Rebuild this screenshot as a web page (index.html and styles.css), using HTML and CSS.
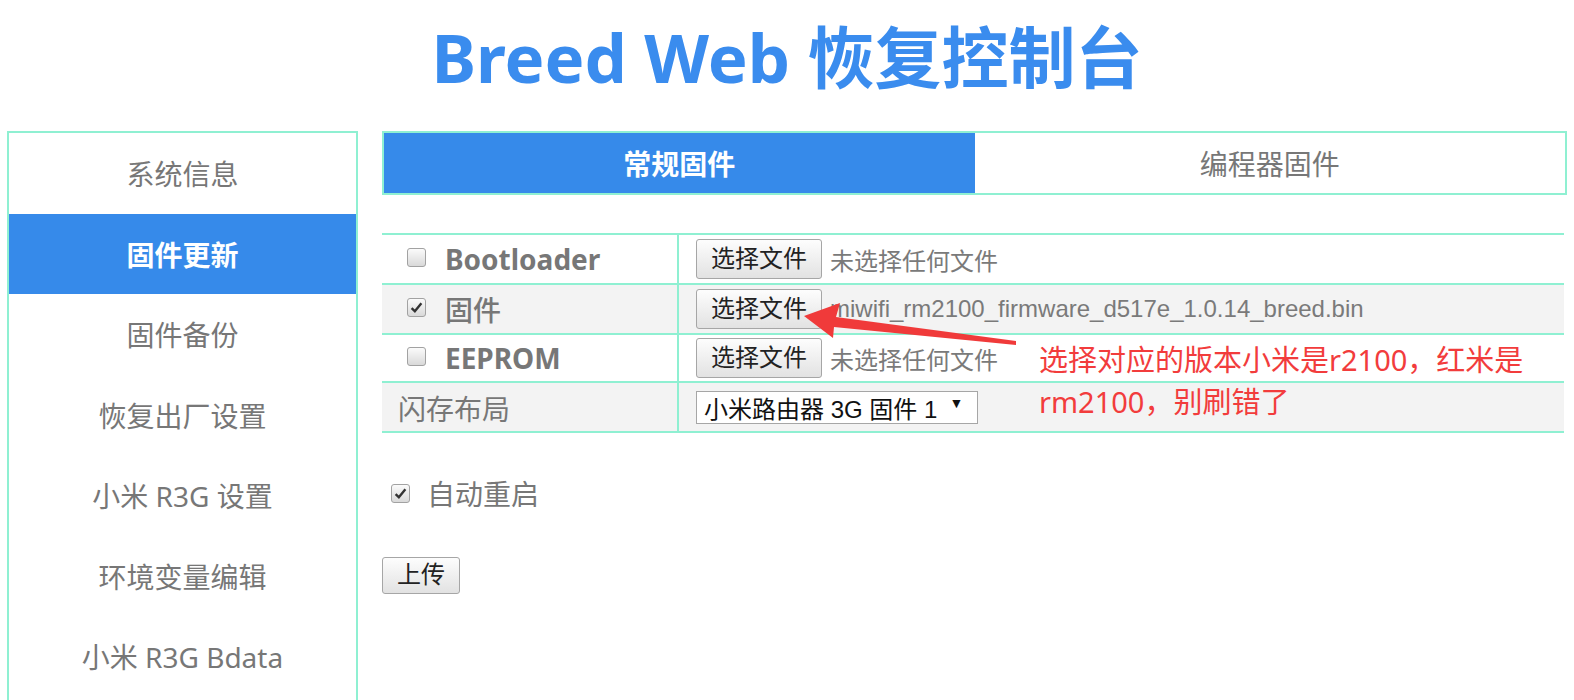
FILE: index.html
```html
<!DOCTYPE html>
<html lang="zh-CN">
<head>
<meta charset="utf-8">
<title>Breed Web 恢复控制台</title>
<link rel="stylesheet" href="styles.css">
</head>
<body>
<header class="header">
  <h1 class="title">Breed Web 恢复控制台</h1>
</header>
<div class="layout">
  <nav class="sidebar">
    <a class="nav-item">系统信息</a>
    <a class="nav-item active">固件更新</a>
    <a class="nav-item">固件备份</a>
    <a class="nav-item">恢复出厂设置</a>
    <a class="nav-item">小米 R3G 设置</a>
    <a class="nav-item">环境变量编辑</a>
    <a class="nav-item">小米 R3G Bdata</a>
  </nav>
  <main class="main">
    <div class="tabs">
      <div class="tab active">常规固件</div>
      <div class="tab">编程器固件</div>
    </div>
    <table class="fw-table">
      <tr>
        <td class="c1"><span class="cb"></span><span class="lbl">Bootloader</span></td>
        <td class="c2"><span class="btn">选择文件</span><span class="fname">未选择任何文件</span></td>
      </tr>
      <tr class="alt">
        <td class="c1"><span class="cb checked"><svg viewBox="0 0 12 12" class="tick"><path d="M1.5 6.5 L4.5 9.5 L10.5 2" fill="none" stroke="#333" stroke-width="2.2"/></svg></span><span class="lbl cjk">固件</span></td>
        <td class="c2"><span class="btn">选择文件</span><span class="fname">miwifi_rm2100_firmware_d517e_1.0.14_breed.bin</span></td>
      </tr>
      <tr>
        <td class="c1"><span class="cb"></span><span class="lbl">EEPROM</span></td>
        <td class="c2"><span class="btn">选择文件</span><span class="fname">未选择任何文件</span></td>
      </tr>
      <tr class="alt">
        <td class="c1 plain">闪存布局</td>
        <td class="c2"><span class="select">小米路由器 3G 固件 1<span class="caret">▼</span></span></td>
      </tr>
    </table>
    <div class="reboot"><span class="cb checked"><svg viewBox="0 0 12 12" class="tick"><path d="M1.5 6.5 L4.5 9.5 L10.5 2" fill="none" stroke="#333" stroke-width="2.2"/></svg></span><span class="reboot-text">自动重启</span></div>
    <div class="upload-row"><span class="btn upload">上传</span></div>

    <div class="note">选择对应的版本小米是r2100，红米是<br>rm2100，别刷错了</div>
    <svg class="arrow" viewBox="0 0 220 50" width="220" height="50">
      <polygon points="2,15 38,2 34,16 214,40 214,44 32,26 31,37" fill="#f03a3a"/>
    </svg>
  </main>
</div>
</body>
</html>
```
FILE: styles.css
```css
* { box-sizing: border-box; }
html, body { margin: 0; padding: 0; background: #fff; overflow: hidden; }
body {
  font-family: "Noto Sans", "Noto Sans CJK SC", sans-serif;
  color: #777;
  width: 1574px;
  height: 700px;
}
.header { height: 131px; padding-top: 15px; }
.title {
  margin: 0;
  text-align: center;
  font-size: 67px;
  line-height: 84px;
  font-weight: 700;
  color: #3a8cee;
}
.layout {
  display: flex;
  gap: 24px;
  padding-left: 7px;
  align-items: flex-start;
}
.sidebar {
  flex: none;
  width: 351px;
  border: 2px solid #8ff0d2;
  display: flex;
  flex-direction: column;
  padding-bottom: 60px;
}
.nav-item {
  height: 80.5px;
  display: flex;
  align-items: center;
  justify-content: center;
  font-size: 28px;
  color: #777;
}
.nav-item.active {
  background: #368aea;
  color: #fff;
  font-weight: 700;
}
.main {
  flex: none;
  width: 1185px;
  position: relative;
}
.tabs {
  display: flex;
  height: 64px;
  border: 2px solid #8ff0d2;
}
.tab {
  flex: 1;
  display: flex;
  align-items: center;
  justify-content: center;
  font-size: 28px;
  color: #777;
}
.tab.active {
  background: #368aea;
  color: #fff;
  font-weight: 700;
}
.fw-table {
  margin-top: 38px;
  width: 1182px;
  border-collapse: collapse;
}
.fw-table td {
  border-top: 2px solid #8ff0d2;
  border-bottom: 2px solid #8ff0d2;
  height: 50px;
  padding: 0;
  vertical-align: middle;
}
.fw-table tr.alt td { background: #f3f3f3; }
.fw-table tr:nth-child(3) td { height: 48px; }
.c1 {
  width: 296px;
  border-right: 2px solid #8ff0d2;
  padding-left: 16px !important;
  white-space: nowrap;
}
.c1.plain { font-size: 28px; color: #777; padding-top: 2px !important; }
.c2 { padding-left: 17px !important; white-space: nowrap; }
.cb {
  display: inline-block;
  width: 19px;
  height: 19px;
  border: 1px solid #a2a2a2;
  border-radius: 3px;
  background: linear-gradient(#fbfbfb, #d9d9d9);
  vertical-align: middle;
  margin-left: 9px;
  margin-right: 19px;
  position: relative;
  top: -2px;
}
.cb .tick { width: 13px; height: 13px; display: block; margin: 2px 0 0 2px; }
.lbl {
  font-size: 28px;
  font-weight: 700;
  color: #777;
  vertical-align: middle;
}
.lbl.cjk { font-weight: 500; font-size: 28px; }
.btn {
  display: inline-block;
  vertical-align: middle;
  height: 40px;
  line-height: 37px;
  padding: 0 14px;
  border: 1px solid #a6a6a6;
  border-radius: 3px;
  background: linear-gradient(#fdfdfd, #e2e2e2);
  font-family: "Liberation Sans", "Noto Sans CJK SC", sans-serif;
  font-size: 24px;
  color: #222;
}
.fname {
  display: inline-block;
  vertical-align: middle;
  margin-left: 8px;
  font-family: "Liberation Sans", "Noto Sans CJK SC", sans-serif;
  font-size: 24px;
  color: #7a7a7a;
}
.select {
  display: inline-flex;
  align-items: center;
  vertical-align: middle;
  width: 282px;
  height: 33px;
  padding: 0 0 0 7px;
  border: 1px solid #a6a6a6;
  background: #fff;
  font-family: "Liberation Sans", "Noto Sans CJK SC", sans-serif;
  font-size: 24px;
  color: #111;
}
.caret { font-size: 14px; margin-left: 12px; position: relative; top: -4px; }
.reboot {
  margin-top: 40px;
  height: 40px;
  display: flex;
  align-items: center;
}
.reboot .cb { margin-left: 9px; margin-right: 17px; top: 0; }
.reboot-text { font-size: 28px; color: #777; }
.upload-row { margin-top: 44px; }
.btn.upload { height: 37px; line-height: 34px; padding: 0 14px; font-size: 24px; }
.note {
  position: absolute;
  left: 657px;
  top: 208px;
  font-size: 29px;
  line-height: 42px;
  color: #f23c3c;
  white-space: nowrap;
}
.arrow {
  position: absolute;
  left: 420px;
  top: 170px;
  overflow: visible;
}
```
